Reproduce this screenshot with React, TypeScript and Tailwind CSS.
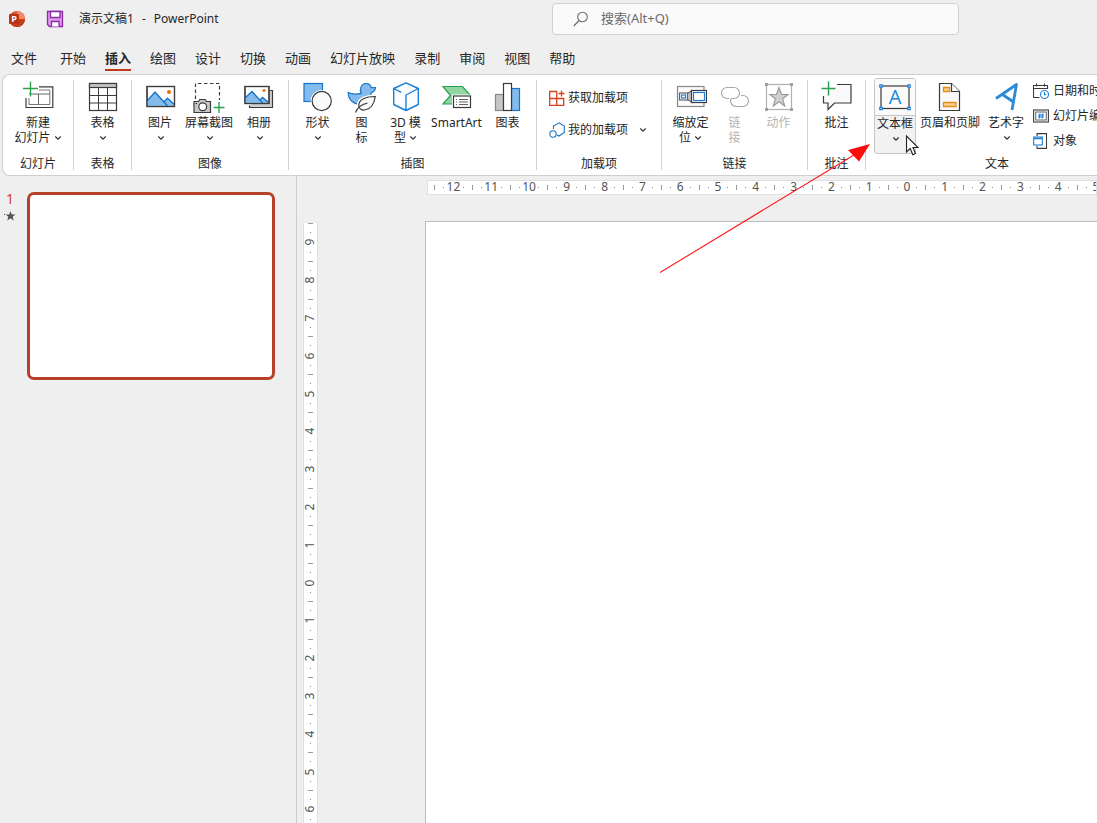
import type { ReactNode } from "react";

interface IconProps {
  children: ReactNode;
}

const Icon = ({ children }: IconProps) => (
  <svg viewBox="0 0 32 32" className="h-8 w-8 shrink-0" fill="none" stroke="#3b3b3b" strokeWidth="1.2">
    {children}
  </svg>
);

const SmallIcon = ({ children }: IconProps) => (
  <svg viewBox="0 0 16 16" className="h-4 w-4 shrink-0" fill="none" stroke="#3b3b3b" strokeWidth="1.1">
    {children}
  </svg>
);

const Chevron = () => (
  <svg viewBox="0 0 8 6" className="inline-block h-[6px] w-2 shrink-0" fill="none" stroke="#333" strokeWidth="1.2">
    <path d="M1.3 1.5 4 4.2 6.7 1.5" />
  </svg>
);

const NewSlideIcon = () => (
  <Icon>
    <path d="M17 5.8h13.8v20.7H4V17" />
    <path d="M17 9h10.8v14.5H7V17" strokeWidth="1" stroke="#777" />
    <path d="M7 13h20.8M16.5 13v10.5" strokeWidth="1" stroke="#666" />
    <path d="M8.5.5v15M1 7.5h15" stroke="#2aa14c" strokeWidth="1.4" />
  </Icon>
);

const TableIcon = () => (
  <Icon>
    <rect x="2.5" y="2.5" width="27" height="27" fill="#fff" />
    <rect x="2.5" y="2.5" width="27" height="4" fill="#c8c6c4" />
    <path d="M11.5 6.5v23M20.5 6.5v23M2.5 14.5h27M2.5 22h27" strokeWidth="1" />
  </Icon>
);

const PictureIcon = () => (
  <Icon>
    <rect x="3" y="5.5" width="27.5" height="20" fill="#fff" />
    <path d="M3.5 19.5 11 11l9 9.5 3.5-3.5 6.500 6v2H3.500z" fill="#83bbec" stroke="none" />
    <path d="M3.5 19.5 11 11l12.500 14M20 20.800l3.500-3.600 6.500 6" stroke="#1b74c5" strokeWidth="1.4" />
    <rect x="3" y="5.5" width="27.5" height="20" />
    <circle cx="25" cy="11" r="2" fill="#e8730c" stroke="none" />
  </Icon>
);

const ScreenshotIcon = () => (
  <Icon>
    <path d="M2.5 18V2.5h24V19" strokeDasharray="3.5 2.5" />
    <path d="M1 20.5h4.5l1.3-2h5.4l1.3 2h4v11H1z" fill="#c8c6c4" />
    <circle cx="9.7" cy="25.7" r="3.9" fill="#fff" />
    <path d="M2.5 22.5h1.5" />
    <path d="M26 21v11M20.5 26.5h11" stroke="#2aa14c" strokeWidth="1.4" />
  </Icon>
);

const AlbumIcon = () => (
  <Icon>
    <path d="M27 9.5h2.5v17H6.5v-2" fill="#d2d0ce" />
    <rect x="2" y="5.5" width="24" height="17" fill="#fff" />
    <path d="M2.5 16.5 9 10.5l8 8.5 2.5-2.5 6 5v.7h-23z" fill="#83bbec" stroke="none" />
    <path d="M2.5 16.5 9 10.5l11 12M17 19l2.5-2.5 6 5" stroke="#1b74c5" strokeWidth="1.4" />
    <rect x="2" y="5.5" width="24" height="17" />
    <circle cx="21" cy="9.5" r="1.6" fill="#e8730c" stroke="none" />
  </Icon>
);

const ShapesIcon = () => (
  <Icon>
    <rect x="2" y="2.5" width="18.5" height="18" fill="#83bbec" stroke="#1b74c5" />
    <circle cx="19.7" cy="20" r="11" fill="#fff" stroke="none" />
    <circle cx="19.7" cy="20" r="9.6" fill="#fafafa" />
  </Icon>
);

const DuckIcon = () => (
  <Icon>
    <path
      d="M2.2 11.5c4 2.2 8.5 1.8 13 .8-1.8-2.8-.8-9.8 5-9.8 3 0 4.5 2 5 4 1.500.3 3.300.2 4.300 0-.2 3-2 4.600-4.500 5.300 1.500 7-3 11.700-9.500 11.700C7.500 23.500 2.200 19 2.200 11.500z"
      fill="#83bbec"
      stroke="#1b74c5"
    />
    <path d="M29.3 15.5c-9 0-17 3-16.5 9.5.3 3 3 4.5 6 4 6-1 9.5-6.500 10.500-13.500z" fill="#fff" stroke="#fff" strokeWidth="4" />
    <path d="M29.3 15.5c-9 0-17 3-16.5 9.5.3 3 3 4.5 6 4 6-1 9.5-6.500 10.500-13.500z" fill="#fafafa" />
    <path d="M9.5 31.5c1.5-4.5 6-8 12-9.500" />
  </Icon>
);

const CubeIcon = () => (
  <Icon>
    <path
      d="M16 1.8 28.3 7.5v16L16 29.5 3.7 23.5v-16zM28.3 7.5 16 14v15.500M3.700 7.500l7.500 3.800"
      fill="#fafcff"
      stroke="#1b7fd6"
      strokeWidth="1.4"
      strokeLinejoin="round"
    />
  </Icon>
);

const SmartArtIcon = () => (
  <Icon>
    <path d="M2 5.5h19.5l8 9H18.5l-7 8.5H2l7.5-8.5z" fill="#8fd6a3" stroke="#2f9e52" />
    <rect x="12" y="14.5" width="18" height="13" fill="#fff" stroke="#fff" strokeWidth="2" />
    <rect x="12.5" y="15" width="17" height="11.5" fill="#fff" />
    <path d="M15 18.5h1M18 18.5h9M15 21h1M18 21h9M15 23.5h1M18 23.5h9" strokeWidth=".8" />
  </Icon>
);

const ChartIcon = () => (
  <Icon>
    <rect x="3.5" y="13.5" width="8" height="16" fill="#c8c6c4" stroke="#888" />
    <rect x="19.5" y="7.5" width="8" height="22" fill="#83bbec" stroke="#1b74c5" />
    <rect x="11.5" y="2.5" width="8" height="27" fill="#fff" />
  </Icon>
);

const ZoomIcon = () => (
  <Icon>
    <rect x="2.5" y="5.5" width="26.5" height="20" fill="#fafafa" stroke="#888" />
    <path d="M12.5 12.5 17 9.5v12l-4.5-3" fill="#c8c6c4" stroke="#666" />
    <rect x="4.5" y="12" width="8" height="7" fill="#fff" stroke="#666" />
    <rect x="6.5" y="14" width="4" height="3" fill="#fff" stroke="#1b7fd6" />
    <rect x="16.5" y="9.5" width="15" height="12" fill="#fff" />
    <rect x="18.5" y="11.5" width="11" height="8" fill="#fff" stroke="#1b7fd6" />
  </Icon>
);

const LinkIcon = () => (
  <Icon>
    <path d="M10 17.500H8a5.500 5.500 0 0 1 0-11h7a5.500 5.500 0 0 1 0 11h-2" stroke="#a8a8a8" />
    <path d="M22 14.500h2a5.500 5.500 0 0 1 0 11h-7a5.500 5.500 0 0 1-4.500-8.500" stroke="#a8a8a8" />
  </Icon>
);

const ActionIcon = () => (
  <Icon>
    <rect x="3.5" y="3.5" width="25" height="25" stroke="#b0b0b0" />
    <path d="M2 2h3v3H2zM27 2h3v3h-3zM2 27h3v3H2zM27 27h3v3h-3z" fill="#a0a0a0" stroke="none" />
    <path d="m16 6.5 2.500 7H25l-5.300 4.300 2 7.200L16 20.800 10.300 25l2-7.200L7 13.500h6.500z" fill="#d0d0d0" stroke="#9a9a9a" />
  </Icon>
);

const CommentIcon = () => (
  <Icon>
    <path d="M16 3.5h14V22H13.5L7 28.500V22H2.500V15" fill="#fafafa" />
    <path d="M7.5.5v14M.5 7.5h14" stroke="#2aa14c" strokeWidth="1.5" />
  </Icon>
);

const TextBoxIcon = () => (
  <Icon>
    <rect x="2" y="5" width="28" height="22.5" fill="#fafafa" />
    <path d="M.8 3.8h2.400v2.400H.8zM28.800 3.800h2.400v2.400h-2.400zM.8 26.300h2.400v2.400H.8zM28.800 26.300h2.400v2.400h-2.400z" fill="#fff" stroke="#1b7fd6" />
    <text x="16" y="23" textAnchor="middle" fontSize="20" fill="#1b88d8" stroke="none" className="font-['Open_Sans',sans-serif]">
      A
    </text>
  </Icon>
);

const HeaderFooterIcon = () => (
  <Icon>
    <path d="M5.5 2.5h12l8 8v19h-20z" fill="#fafafa" />
    <path d="M17.5 2.5v8h8" fill="#fff" />
    <path d="M9.5 6.5h6v4h-6zM9.5 21.5H22v4H9.500z" fill="#fbd28c" stroke="#e88a1a" strokeWidth="1.3" />
  </Icon>
);

const WordArtIcon = () => (
  <Icon>
    <path d="M6 17.5 26.5 3.5l-4.500 25.500M12.500 13.500l11 7.500" stroke="#2b8bd6" strokeWidth="2.8" strokeLinejoin="round" />
  </Icon>
);

interface ToolProps {
  icon: ReactNode;
  lines: string[];
  width: string;
  arrow?: "inline" | "below";
  disabled?: boolean;
}

const Tool = ({ icon, lines, width, arrow, disabled }: ToolProps) => (
  <button
    disabled={disabled}
    className={`flex h-[76px] shrink-0 flex-col items-center gap-0.5 whitespace-nowrap pt-[3px] leading-[15px] ${width} ${disabled ? "text-[#b4b4b4]" : ""}`}
  >
    {icon}
    <span className="flex flex-col items-center">
      {lines.map((line, i) => (
        <span key={line} className="flex items-center gap-[3px]">
          {line}
          {arrow === "inline" && i === lines.length - 1 && <Chevron />}
        </span>
      ))}
      {arrow === "below" && (
        <span className="flex h-[15px] items-center pl-0.5">
          <Chevron />
        </span>
      )}
    </span>
  </button>
);

interface GroupProps {
  title: string;
  width: string;
  children: ReactNode;
}

const Group = ({ title, width, children }: GroupProps) => (
  <section className={`flex shrink-0 flex-col pt-[3px] ${width}`}>
    <div className="flex h-[76px] justify-center">{children}</div>
    <h2 className="text-center leading-5">{title}</h2>
  </section>
);

const Divider = () => <span className="my-[5px] w-px shrink-0 bg-[#d0d0d0]" />;

const tabs = ["开始", "插入", "绘图", "设计", "切换", "动画", "幻灯片放映", "录制", "审阅", "视图", "帮助"];

const TitleBar = () => (
  <header className="flex h-[38px] shrink-0 items-center text-xs">
    <div className="flex w-[552px] shrink-0 items-center pl-2">
      <svg viewBox="0 0 18 18" className="h-[18px] w-[18px]">
        <circle cx="9" cy="9" r="8" fill="#d65532" />
        <path d="M9 1a8 8 0 0 1 8 8H9z" fill="#f08a6a" />
        <path d="M1 9h16a8 8 0 0 1-16 0z" fill="#c43e1c" />
        <rect x="1" y="4" width="10" height="10" rx="1" fill="#b7331a" />
        <text x="6" y="12.2" textAnchor="middle" fontSize="9" fontWeight="700" fill="#fff" className="font-['Open_Sans',sans-serif]">
          P
        </text>
      </svg>
      <button aria-label="保存" className="ml-5">
        <svg viewBox="0 0 18 18" className="h-[18px] w-[18px]" stroke="#8d2aa8" strokeWidth="1.3">
          <path d="M1.5 1.500h15v15H3.500l-2-2z" fill="#d99be8" />
          <path d="M4.5 1.500h9.500v6H4.500z" fill="#fff" />
          <path d="M5.5 16.500v-5h7.500v5" fill="#fff" />
        </svg>
      </button>
      <h1 className="ml-[15px] flex gap-2">
        <span>演示文稿1</span>
        <span>-</span>
        <span>PowerPoint</span>
      </h1>
    </div>
    <label className="flex h-8 max-w-[407px] flex-1 items-center rounded-[4px] border border-[#d0d0d0] bg-[#fafafa] pl-5">
      <svg viewBox="0 0 16 16" className="h-4 w-4" fill="none" stroke="#666" strokeWidth="1.1">
        <circle cx="9.5" cy="6" r="4.8" />
        <path d="M6 9.5.8 15" />
      </svg>
      <input
        type="search"
        aria-label="搜索"
        placeholder="搜索(Alt+Q)"
        className="ml-3 min-w-0 flex-1 bg-transparent text-[13px] outline-none placeholder:text-[#6a6a6a]"
      />
    </label>
  </header>
);

const Tabs = () => (
  <nav className="flex h-9 shrink-0 items-start gap-[19px] pl-[11px] pt-[10px] text-[13px] leading-5">
    <a href="#file" className="mr-1">
      文件
    </a>
    {tabs.map((tab) => (
      <a
        key={tab}
        href={`#${tab}`}
        className={`whitespace-nowrap ${tab === "插入" ? "border-b-2 border-[#c0391b] pb-px font-bold" : ""}`}
      >
        {tab}
      </a>
    ))}
  </nav>
);

const Ribbon = () => (
  <div className="ml-0.5 flex h-[102px] shrink-0 overflow-hidden rounded-l-lg border border-r-0 border-[#cfcfcf] bg-white text-xs">
    <Group title="幻灯片" width="w-[70px]">
      <Tool icon={<NewSlideIcon />} lines={["新建", "幻灯片"]} arrow="inline" width="w-[70px]" />
    </Group>
    <Divider />
    <Group title="表格" width="w-[57px]">
      <Tool icon={<TableIcon />} lines={["表格"]} arrow="below" width="w-[48px]" />
    </Group>
    <Divider />
    <Group title="图像" width="w-[156px]">
      <Tool icon={<PictureIcon />} lines={["图片"]} arrow="below" width="w-[48px]" />
      <Tool icon={<ScreenshotIcon />} lines={["屏幕截图"]} arrow="below" width="w-[50px]" />
      <Tool icon={<AlbumIcon />} lines={["相册"]} arrow="below" width="w-[50px]" />
    </Group>
    <Divider />
    <Group title="插图" width="w-[247px]">
      <Tool icon={<ShapesIcon />} lines={["形状"]} arrow="below" width="w-[44px]" />
      <Tool icon={<DuckIcon />} lines={["图", "标"]} width="w-[44px]" />
      <Tool icon={<CubeIcon />} lines={["3D 模", "型"]} arrow="inline" width="w-[44px]" />
      <Tool icon={<SmartArtIcon />} lines={["SmartArt"]} width="w-[58px]" />
      <Tool icon={<ChartIcon />} lines={["图表"]} width="w-[44px]" />
    </Group>
    <Divider />
    <Group title="加载项" width="w-[124px]">
      <div className="flex flex-1 flex-col pl-3 pt-1">
        <button className="flex h-8 items-center gap-[3px]">
          <SmallIcon>
            <path d="M.7 1.5h7v14h-7zM.7 8.5h14v7h-14M12.5.5v6M9.500 3.500h6" stroke="#d8401c" strokeWidth="1.3" />
          </SmallIcon>
          获取加载项
        </button>
        <button className="flex h-8 items-center gap-[3px]">
          <SmallIcon>
            <path d="M4.500 7V4L10 .8 15.300 4v6.500L10 14 8 13" stroke="#1b74c5" />
            <circle cx="4" cy="12" r="3.2" stroke="#1b74c5" />
          </SmallIcon>
          我的加载项
          <span className="ml-2 flex">
            <Chevron />
          </span>
        </button>
      </div>
    </Group>
    <Divider />
    <Group title="链接" width="w-[145px]">
      <Tool icon={<ZoomIcon />} lines={["缩放定", "位"]} arrow="inline" width="w-[44px]" />
      <Tool icon={<LinkIcon />} lines={["链", "接"]} width="w-[44px]" disabled />
      <Tool icon={<ActionIcon />} lines={["动作"]} width="w-[44px]" disabled />
    </Group>
    <Divider />
    <Group title="批注" width="w-[57px]">
      <Tool icon={<CommentIcon />} lines={["批注"]} width="w-[48px]" />
    </Group>
    <Divider />
    <Group title="文本" width="w-[262px]">
      <div className="flex flex-1 pl-2">
        <button className="flex h-[76px] w-[42px] shrink-0 flex-col items-center overflow-hidden whitespace-nowrap rounded-[3px] border border-[#c6c6c6] bg-[#f2f2f2] leading-[15px]">
          <span className="flex w-full justify-center border-b border-[#c6c6c6] bg-[#fafafa] pb-0.5 pt-0.5">
            <TextBoxIcon />
          </span>
          文本框
          <span className="flex h-[15px] items-center pl-0.5">
            <Chevron />
          </span>
        </button>
        <Tool icon={<HeaderFooterIcon />} lines={["页眉和页脚"]} width="w-[68px]" />
        <Tool icon={<WordArtIcon />} lines={["艺术字"]} arrow="below" width="w-[44px]" />
        <div className="flex flex-col whitespace-nowrap pl-[5px]">
          <button className="flex h-[26px] items-center gap-1">
            <SmallIcon>
              <path d="M6.500 14.500h-6v-12h14V6M.5 5.500h14M3.500.5v3M11.500.5v3" />
              <circle cx="11.5" cy="11.5" r="4" fill="#fff" stroke="#1b7fd6" />
              <path d="M11.500 9v2.700h2" stroke="#1b7fd6" />
            </SmallIcon>
            日期和时间
          </button>
          <button className="flex h-[26px] items-center gap-1">
            <SmallIcon>
              <rect x=".6" y="2" width="14.8" height="12" />
              <rect x="2.8" y="4" width="10.4" height="8" strokeWidth=".8" />
              <path d="M7 5.500 6.200 10.500M9.800 5.500 9 10.500M5 7h6M5 9h6" stroke="#1b7fd6" />
            </SmallIcon>
            幻灯片编号
          </button>
          <button className="flex h-[26px] items-center gap-1">
            <SmallIcon>
              <path d="M4 3V.6h9.500v14.800H4V13" />
              <rect x=".7" y="4" width="8.6" height="8" fill="#fff" stroke="#1b7fd6" />
              <path d="M.7 5.500h8.600" stroke="#1b7fd6" strokeWidth="1.5" />
            </SmallIcon>
            对象
          </button>
        </div>
      </div>
    </Group>
  </div>
);

const marks = (max: number) => Array.from({ length: max * 2 + 1 }, (_, i) => Math.abs(i - max));

const HorizontalRuler = () => (
  <div className="ml-[130px] h-[15px] shrink-0 overflow-hidden border border-[#e0e0e0] bg-white pl-1.5 text-xs text-[#555]">
    <ol className="flex h-3 w-[945px]">
      {marks(12).map((n, i) => (
        <li key={i} className="flex flex-1 items-center">
          <span className="h-[5px] w-px bg-[#999]" />
          <span className="flex flex-1 items-center justify-between px-2 leading-3">
            <i className="h-px w-px bg-[#888]" />
            {n}
            <i className="h-px w-px bg-[#888]" />
          </span>
        </li>
      ))}
    </ol>
  </div>
);

const VerticalRuler = () => (
  <div className="w-[15px] shrink-0 overflow-hidden border-x border-[#e0e0e0] bg-white text-xs text-[#555]">
    <ol className="flex h-[718px] w-3 flex-col">
      {marks(9).map((n, i) => (
        <li key={i} className="flex flex-1 flex-col items-center">
          <span className="h-px w-[5px] bg-[#999]" />
          <span className="flex flex-1 flex-col items-center justify-between py-2">
            <i className="h-px w-px bg-[#888]" />
            <span className="flex h-3 w-3 -rotate-90 items-center justify-center leading-3">{n}</span>
            <i className="h-px w-px bg-[#888]" />
          </span>
        </li>
      ))}
    </ol>
  </div>
);

const SlidePanel = () => (
  <aside className="flex w-[297px] shrink-0 items-start border-r border-[#cccccc] pl-1 pt-4">
    <div className="flex w-[23px] flex-col items-start pl-0.5 text-sm leading-[14px] text-[#d8402a]">
      1
      <svg viewBox="0 0 12 12" className="-ml-0.5 mt-1 h-3 w-3" fill="#555">
        <path d="m6.500 1 1.300 3.500h3.700L8.700 6.700l1 3.800-3.200-2.200-3.200 2.200 1-3.800L1.500 4.500h3.700zM0 4h1v1H0z" />
      </svg>
    </div>
    <button aria-label="幻灯片 1" className="h-[188px] w-[248px] rounded-[7px] border-3 border-[#b7402a] bg-white" />
  </aside>
);

const Pointer = () => (
  <svg viewBox="0 0 14 22" className="pointer-events-none absolute left-[905px] top-[135px] h-[22px] w-[14px]">
    <path d="M1.500 1v16l3.700-3.500 2.600 6.200 2.700-1.200L8 12.500h5z" fill="#fff" stroke="#222" strokeWidth="1.1" />
  </svg>
);

const RedArrow = () => (
  <svg viewBox="0 0 212 132" className="pointer-events-none absolute left-[659px] top-[142px] h-[132px] w-[212px]">
    <path d="M1 130.500 195 13" stroke="#ff1a1a" strokeWidth="1.1" />
    <path d="M211 2 189 8l11 11.500z" fill="#fb0d0d" />
  </svg>
);

export default function App() {
  return (
    <div className="relative flex h-screen flex-col overflow-hidden bg-[#efefef] font-['Noto_Sans','Noto_Sans_CJK_SC',sans-serif] text-[#262626]">
      <TitleBar />
      <Tabs />
      <Ribbon />
      <main className="flex min-h-0 flex-1">
        <SlidePanel />
        <div className="flex min-w-0 flex-1 flex-col pt-1">
          <HorizontalRuler />
          <div className="mt-[26px] flex min-h-0 flex-1 pl-1.5">
            <div className="flex pt-0.5">
              <VerticalRuler />
            </div>
            <div className="ml-[107px] flex-1 border-l border-t border-[#bdbdbd] bg-white" />
          </div>
        </div>
      </main>
      <RedArrow />
      <Pointer />
    </div>
  );
}
